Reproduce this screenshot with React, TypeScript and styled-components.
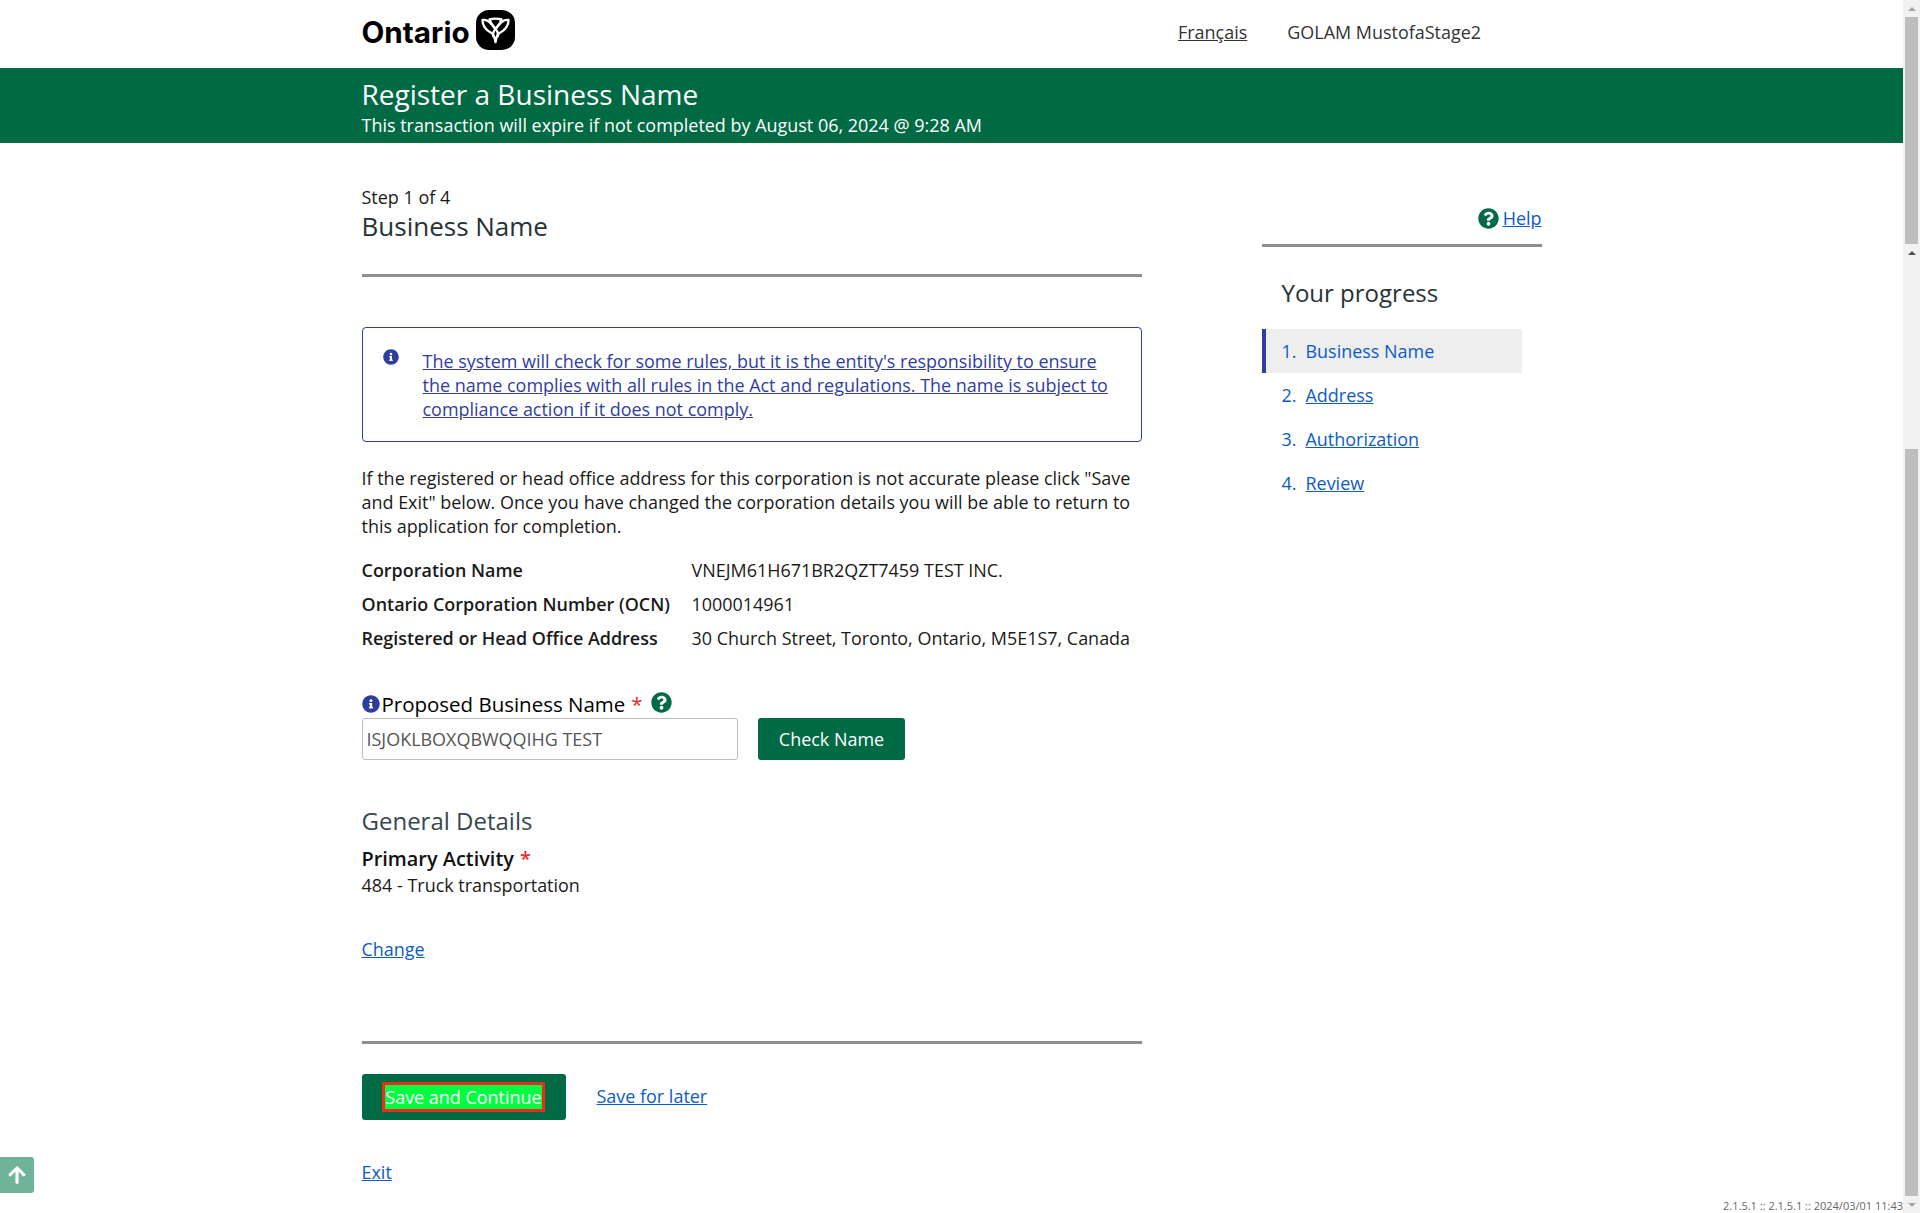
import { createGlobalStyle, styled } from 'styled-components'
import { FaArrowUp, FaInfoCircle, FaQuestionCircle } from 'react-icons/fa'

const GREEN = '#006a44'
const LINK = '#0b5cc9'
const INDIGO = '#2f3e9e'

const GlobalStyle = createGlobalStyle`
    html, body {
        margin: 0;
        padding: 0;
        height: 1213px;
        overflow: hidden;
        background: #fff;
    }
    body {
        font-family: 'Open Sans', 'Liberation Sans', sans-serif;
        font-size: 17.97px;
        line-height: 24px;
        color: #1a1a1a;
    }
    * {
        box-sizing: border-box;
    }
`

const Frame = styled.div`
    display: flex;
    width: 1920px;
    height: 1213px;
    overflow: hidden;
`

const Page = styled.div`
    position: relative;
    width: 1903px;
    height: 1213px;
`

const TopBar = styled.header`
    height: 68px;
    padding: 0 0 0 361.5px;
    display: flex;
    align-items: center;
`

const Brand = styled.div`
    display: flex;
    align-items: center;
    gap: 6px;
    width: 816.5px;
    margin-top: -8px;
`

const BrandName = styled.span`
    font-family: 'Inter', 'Open Sans', sans-serif;
    font-weight: 700;
    font-size: 29.7px;
    line-height: 36px;
    color: #000;
    margin-top: 4px;
`

const TopLinks = styled.nav`
    display: flex;
    gap: 40px;
    margin-top: -4px;
    color: #333;
`

const LangLink = styled.a`
    color: #333;
    text-decoration: underline;
`

const Band = styled.div`
    height: 75px;
    background: ${GREEN};
    color: #fff;
    padding: 10px 0 0 361.5px;
`

const BandTitle = styled.h1`
    margin: 0 0 3px;
    font-size: 28px;
    line-height: 32px;
    font-weight: 400;
`

const BandNote = styled.p`
    margin: 0;
    line-height: 24px;
    font-weight: 500;
`

const Columns = styled.div`
    display: flex;
    padding-left: 361.5px;
    gap: 120px;
`

const Main = styled.main`
    width: 780px;
    padding-top: 42px;
`

const Step = styled.div`
    line-height: 24px;
`

const SectionTitle = styled.h2`
    margin: -1px 0 0;
    font-size: 26px;
    line-height: 36px;
    font-weight: 400;
    color: #263238;
`

const Rule = styled.hr<{ $top: number }>`
    height: 3px;
    margin: ${(p) => p.$top}px 0 0;
    border: 0;
    background: #8f8f8f;
`

const Notice = styled.div`
    display: flex;
    gap: 24px;
    height: 115px;
    margin-top: 50px;
    padding: 20.5px 20px 0 20px;
    border: 1px solid ${INDIGO};
    border-radius: 4px;
`

const NoticeIcon = styled.span`
    flex: none;
    height: 16px;
    font-size: 16px;
    line-height: 0;
    color: ${INDIGO};
`

const NoticeText = styled.a`
    color: ${INDIGO};
    text-decoration: underline;
`

const Paragraph = styled.p`
    margin: 24px 0 0;
`

const Facts = styled.dl`
    display: grid;
    grid-template-columns: 330px 1fr;
    grid-auto-rows: 34px;
    align-items: center;
    margin: 15px 0 0;
`

const FactLabel = styled.dt`
    font-weight: 600;
`

const FactValue = styled.dd`
    margin: 0;
`

const FieldLabel = styled.div`
    display: flex;
    align-items: center;
    margin-top: 35px;
    height: 28px;
    font-size: 20.48px;
    font-weight: 500;
    color: #000;
`

const FieldIcon = styled.span`
    height: 18px;
    font-size: 18px;
    line-height: 0;
    color: ${INDIGO};
`

const FieldName = styled.span`
    margin-left: 2px;
`

const Required = styled.span`
    color: #f0282d;
    margin-left: 6px;
`

const HelpGlyph = styled.span`
    height: 21px;
    font-size: 21px;
    line-height: 0;
    color: ${GREEN};
`

const FieldHelp = styled(HelpGlyph)`
    margin-left: 8px;
    margin-top: -3px;
`

const FieldRow = styled.div`
    display: flex;
    gap: 20px;
`

const NameInput = styled.input`
    width: 376.5px;
    height: 42px;
    padding: 0 4px;
    border: 1px solid #bdbdbd;
    border-radius: 3px;
    font: inherit;
    color: #555;
`

const Button = styled.button`
    border: 0;
    border-radius: 3px;
    background: ${GREEN};
    color: #fff;
    font: inherit;
    padding: 0;
`

const CheckButton = styled(Button)`
    width: 147px;
    height: 42px;
`

const SubHeading = styled.h3`
    margin: 45px 0 0;
    font-size: 24px;
    line-height: 32px;
    font-weight: 400;
    color: #37474f;
`

const ActivityLabel = styled.div`
    margin-top: 8px;
    font-size: 19.9px;
    font-weight: 600;
    line-height: 28px;
    color: #111;
`

const ActivityValue = styled.div`
    line-height: 25px;
`

const TextLink = styled.a`
    color: ${LINK};
    text-decoration: underline;
`

const SaveLater = styled(TextLink)`
    margin-bottom: 2px;
`

const ChangeRow = styled.div`
    margin-top: 39px;
`

const Actions = styled.div`
    display: flex;
    align-items: center;
    gap: 31px;
    margin-top: 30px;
`

const SaveButton = styled(Button)`
    width: 204px;
    height: 46px;
    display: flex;
    align-items: center;
    justify-content: center;
`

const SaveLabel = styled.span`
    display: block;
    height: 30px;
    line-height: 24px;
    background: #00ff41;
    border: 3px solid #f0281e;
`

const ExitRow = styled.div`
    margin-top: 40px;
`

const Side = styled.aside`
    width: 280px;
    padding-top: 63px;
`

const HelpRow = styled.div`
    display: flex;
    justify-content: flex-end;
    align-items: center;
    gap: 4px;
    height: 24px;
`

const ProgressTitle = styled.h2`
    margin: 28px 0 0 20px;
    font-size: 24px;
    line-height: 36px;
    font-weight: 400;
    color: #263238;
`

const ProgressList = styled.ol`
    list-style: none;
    margin: 18px 0 0;
    padding: 0;
    width: 260px;
`

const ProgressItem = styled.li<{ $active?: boolean }>`
    display: flex;
    align-items: center;
    gap: 9px;
    height: 44px;
    padding-left: ${(p) => (p.$active ? 16 : 20)}px;
    color: ${LINK};
    background: ${(p) => (p.$active ? '#eeeeee' : 'transparent')};
    border-left: ${(p) => (p.$active ? `4px solid ${INDIGO}` : '0')};
`

const BackToTop = styled.button`
    position: absolute;
    left: 0;
    top: 1157px;
    width: 34px;
    height: 36px;
    padding: 0;
    border: 0;
    border-radius: 0 3px 3px 0;
    background: #6fb39b;
    color: #fff;
    font-size: 20px;
    line-height: 0;
`

const Version = styled.div`
    position: absolute;
    right: 0;
    top: 1199px;
    font-size: 11px;
    line-height: 14px;
    color: #666;
`

const Scrollbar = styled.div`
    width: 17px;
    height: 1213px;
    background: #f1f1f1;
    display: flex;
    flex-direction: column;
    align-items: center;
`

const Arrow = styled.div<{ $dir: 'up' | 'down'; $color: string }>`
    width: 0;
    height: 0;
    border-left: 4px solid transparent;
    border-right: 4px solid transparent;
    ${(p) => (p.$dir === 'up' ? 'border-bottom' : 'border-top')}: 4px solid ${(p) => p.$color};
`

const ArrowSlot = styled.div<{ $h: number }>`
    height: ${(p) => p.$h}px;
    display: flex;
    align-items: center;
    justify-content: center;
`

const Thumb = styled.div<{ $h: number }>`
    width: 13px;
    height: ${(p) => p.$h}px;
    background: #bdbdbd;
`

const Gap = styled.div<{ $h: number }>`
    height: ${(p) => p.$h}px;
`

const Trillium = () => (
    <svg width="39" height="40" viewBox="0 0 39 40">
        <rect x="0" y="0" width="39" height="40" rx="13" fill="#000" />
        <g fill="none" stroke="#fff" strokeWidth="2.4" strokeLinejoin="round">
            <path d="M19.5 19C15.5 13 11 9 6.5 10c0 6 3 10 9 13 2 1 3 3 4 9 1-6 2-8 4-9 6-3 9-7 9-13-4.5-1-9 3-13 9z" />
            <path d="M19.5 19c-3-3-5-6-6-9.500 3-1 9-1 12 0-1 3.500-3 6.500-6 9.500z" />
            <path d="M19.500 19c-2 2-3 5-2 8M19.500 19c2 2 3 5 2 8" />
        </g>
    </svg>
)

const steps = ['Address', 'Authorization', 'Review']

export default function App() {
    return (
        <Frame>
            <GlobalStyle />
            <Page>
                <TopBar>
                    <Brand>
                        <BrandName>Ontario</BrandName>
                        <Trillium />
                    </Brand>
                    <TopLinks>
                        <LangLink>Français</LangLink>
                        <span>GOLAM MustofaStage2</span>
                    </TopLinks>
                </TopBar>
                <Band>
                    <BandTitle>Register a Business Name</BandTitle>
                    <BandNote>This transaction will expire if not completed by August 06, 2024 @ 9:28 AM</BandNote>
                </Band>
                <Columns>
                    <Main>
                        <Step>Step 1 of 4</Step>
                        <SectionTitle>Business Name</SectionTitle>
                        <Rule $top={30} />
                        <Notice>
                            <NoticeIcon>
                                <FaInfoCircle />
                            </NoticeIcon>
                            <NoticeText>
                                The system will check for some rules, but it is the entity's responsibility to ensure the name complies with all rules in the Act and regulations. The name is subject to compliance action if it does not comply.
                            </NoticeText>
                        </Notice>
                        <Paragraph>
                            If the registered or head office address for this corporation is not accurate please click "Save and Exit" below. Once you have changed the corporation details you will be able to return to this application for completion.
                        </Paragraph>
                        <Facts>
                            <FactLabel>Corporation Name</FactLabel>
                            <FactValue>VNEJM61H671BR2QZT7459 TEST INC.</FactValue>
                            <FactLabel>Ontario Corporation Number (OCN)</FactLabel>
                            <FactValue>1000014961</FactValue>
                            <FactLabel>Registered or Head Office Address</FactLabel>
                            <FactValue>30 Church Street, Toronto, Ontario, M5E1S7, Canada</FactValue>
                        </Facts>
                        <FieldLabel>
                            <FieldIcon>
                                <FaInfoCircle />
                            </FieldIcon>
                            <FieldName>Proposed Business Name</FieldName>
                            <Required>*</Required>
                            <FieldHelp>
                                <FaQuestionCircle />
                            </FieldHelp>
                        </FieldLabel>
                        <FieldRow>
                            <NameInput readOnly value="ISJOKLBOXQBWQQIHG TEST" />
                            <CheckButton>Check Name</CheckButton>
                        </FieldRow>
                        <SubHeading>General Details</SubHeading>
                        <ActivityLabel>
                            Primary Activity<Required>*</Required>
                        </ActivityLabel>
                        <ActivityValue>484 - Truck transportation</ActivityValue>
                        <ChangeRow>
                            <TextLink>Change</TextLink>
                        </ChangeRow>
                        <Rule $top={80} />
                        <Actions>
                            <SaveButton>
                                <SaveLabel>Save and Continue</SaveLabel>
                            </SaveButton>
                            <SaveLater>Save for later</SaveLater>
                        </Actions>
                        <ExitRow>
                            <TextLink>Exit</TextLink>
                        </ExitRow>
                    </Main>
                    <Side>
                        <HelpRow>
                            <HelpGlyph>
                                <FaQuestionCircle />
                            </HelpGlyph>
                            <TextLink>Help</TextLink>
                        </HelpRow>
                        <Rule $top={14} />
                        <ProgressTitle>Your progress</ProgressTitle>
                        <ProgressList>
                            <ProgressItem $active>
                                <span>1.</span>
                                <span>Business Name</span>
                            </ProgressItem>
                            {steps.map((label, i) => (
                                <ProgressItem key={label}>
                                    <span>{i + 2}.</span>
                                    <TextLink>{label}</TextLink>
                                </ProgressItem>
                            ))}
                        </ProgressList>
                    </Side>
                </Columns>
                <BackToTop aria-label="Back to top">
                    <FaArrowUp />
                </BackToTop>
                <Version>2.1.5.1 :: 2.1.5.1 :: 2024/03/01 11:43</Version>
            </Page>
            <Scrollbar>
                <ArrowSlot $h={17}>
                    <Arrow $dir="up" $color="#a3a3a3" />
                </ArrowSlot>
                <Thumb $h={227} />
                <ArrowSlot $h={17}>
                    <Arrow $dir="up" $color="#505050" />
                </ArrowSlot>
                <Gap $h={188} />
                <Thumb $h={747} />
                <ArrowSlot $h={17}>
                    <Arrow $dir="down" $color="#a3a3a3" />
                </ArrowSlot>
            </Scrollbar>
        </Frame>
    )
}
